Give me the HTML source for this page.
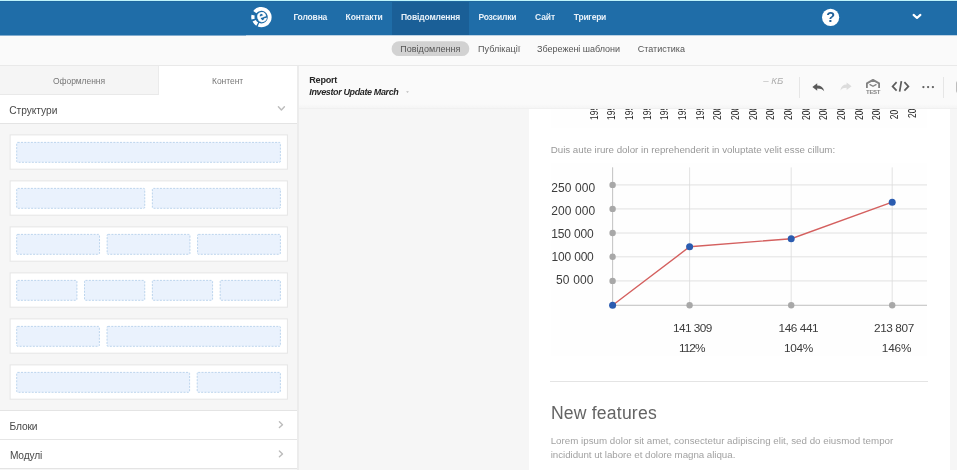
<!DOCTYPE html>
<html lang="uk"><head><meta charset="utf-8"><title>Report — Investor Update March</title>
<style>
html,body{margin:0;padding:0;}
body{width:957px;height:470px;overflow:hidden;position:relative;background:#f6f6f6;font-family:"Liberation Sans", sans-serif;}
.abs{position:absolute;}
.t{position:absolute;white-space:nowrap;line-height:20px;height:20px;}
.layer{position:absolute;left:0;top:0;width:957px;height:470px;will-change:transform;}
.yr{position:absolute;left:0;top:0;width:40px;height:12px;line-height:12px;font-size:10.6px;color:#262626;white-space:nowrap;transform-origin:0 0;text-align:left;}
</style></head><body>
<!-- header -->
<div class="abs" style="left:0;top:0;width:957px;height:35px;background:#1f6da8"></div>
<div class="abs" style="left:0;top:35px;width:957px;height:1px;background:#bcd2e4;z-index:1"></div>
<div class="abs" style="left:0;top:35px;width:246px;height:1px;background:#82acce;z-index:1"></div>
<div class="abs" style="left:0;top:0;width:957px;height:1px;background:#bdf3fb"></div>
<div class="abs" style="left:0;top:1px;width:957px;height:1px;background:#1f679e"></div>
<div class="abs" style="left:392px;top:2px;width:77.3px;height:33px;background:#1a5f97"></div>
<!-- subnav -->
<div class="abs" style="left:0;top:35px;width:957px;height:30.5px;background:#fafafa"></div>
<div class="abs" style="left:0;top:65px;width:957px;height:1px;background:#e9e9e9"></div>
<svg class="abs" style="left:0;top:36px" width="957" height="30"><rect x="391.6" y="5.3" width="77.7" height="14.8" rx="7.4" fill="#d2d2d2"/></svg>
<!-- sidebar -->
<div class="abs" style="left:0;top:66px;width:297px;height:404px;background:#f6f6f6"></div>
<div class="abs" style="left:297px;top:66px;width:2px;height:404px;background:#ececec"></div>
<div class="abs" style="left:0;top:66px;width:158.5px;height:29px;background:#f5f5f5;border-right:1px solid #ebebeb;border-bottom:1px solid #e9e9e9;box-sizing:border-box"></div>
<div class="abs" style="left:158.5px;top:66px;width:138.5px;height:29px;background:#fff"></div>
<div class="abs" style="left:0;top:95px;width:297px;height:28.5px;background:#fff;border-bottom:1px solid #e4e4e4;box-sizing:border-box"></div>
<svg class="abs" style="left:0;top:0" width="300" height="470" viewBox="0 0 300 470"><rect x="10.10" y="134.90" width="277.30" height="34.30" fill="#fff" stroke="#e5e5e5" stroke-width="1"/><rect x="16.70" y="142.40" width="263.70" height="19.90" rx="1" fill="#eaf2fd" stroke="#adcbe8" stroke-width="0.8" stroke-dasharray="2 1.3"/><rect x="10.10" y="180.90" width="277.30" height="34.30" fill="#fff" stroke="#e5e5e5" stroke-width="1"/><rect x="16.70" y="188.40" width="128.05" height="19.90" rx="1" fill="#eaf2fd" stroke="#adcbe8" stroke-width="0.8" stroke-dasharray="2 1.3"/><rect x="152.35" y="188.40" width="128.05" height="19.90" rx="1" fill="#eaf2fd" stroke="#adcbe8" stroke-width="0.8" stroke-dasharray="2 1.3"/><rect x="10.10" y="226.90" width="277.30" height="34.30" fill="#fff" stroke="#e5e5e5" stroke-width="1"/><rect x="16.70" y="234.40" width="82.83" height="19.90" rx="1" fill="#eaf2fd" stroke="#adcbe8" stroke-width="0.8" stroke-dasharray="2 1.3"/><rect x="107.13" y="234.40" width="82.83" height="19.90" rx="1" fill="#eaf2fd" stroke="#adcbe8" stroke-width="0.8" stroke-dasharray="2 1.3"/><rect x="197.57" y="234.40" width="82.83" height="19.90" rx="1" fill="#eaf2fd" stroke="#adcbe8" stroke-width="0.8" stroke-dasharray="2 1.3"/><rect x="10.10" y="272.90" width="277.30" height="34.30" fill="#fff" stroke="#e5e5e5" stroke-width="1"/><rect x="16.70" y="280.40" width="60.23" height="19.90" rx="1" fill="#eaf2fd" stroke="#adcbe8" stroke-width="0.8" stroke-dasharray="2 1.3"/><rect x="84.53" y="280.40" width="60.23" height="19.90" rx="1" fill="#eaf2fd" stroke="#adcbe8" stroke-width="0.8" stroke-dasharray="2 1.3"/><rect x="152.35" y="280.40" width="60.23" height="19.90" rx="1" fill="#eaf2fd" stroke="#adcbe8" stroke-width="0.8" stroke-dasharray="2 1.3"/><rect x="220.17" y="280.40" width="60.23" height="19.90" rx="1" fill="#eaf2fd" stroke="#adcbe8" stroke-width="0.8" stroke-dasharray="2 1.3"/><rect x="10.10" y="318.90" width="277.30" height="34.30" fill="#fff" stroke="#e5e5e5" stroke-width="1"/><rect x="16.70" y="326.40" width="82.70" height="19.90" rx="1" fill="#eaf2fd" stroke="#adcbe8" stroke-width="0.8" stroke-dasharray="2 1.3"/><rect x="107.00" y="326.40" width="173.40" height="19.90" rx="1" fill="#eaf2fd" stroke="#adcbe8" stroke-width="0.8" stroke-dasharray="2 1.3"/><rect x="10.10" y="364.90" width="277.30" height="34.30" fill="#fff" stroke="#e5e5e5" stroke-width="1"/><rect x="16.70" y="372.40" width="172.90" height="19.90" rx="1" fill="#eaf2fd" stroke="#adcbe8" stroke-width="0.8" stroke-dasharray="2 1.3"/><rect x="197.20" y="372.40" width="83.20" height="19.90" rx="1" fill="#eaf2fd" stroke="#adcbe8" stroke-width="0.8" stroke-dasharray="2 1.3"/></svg>
<div class="abs" style="left:0;top:410px;width:297px;height:30px;background:#fff;border-top:1px solid #e4e4e4;border-bottom:1px solid #e6e6e6;box-sizing:border-box"></div>
<div class="abs" style="left:0;top:440px;width:297px;height:29px;background:#fff;border-bottom:1px solid #e4e4e4;box-sizing:border-box"></div>
<!-- email card -->
<div class="abs" style="left:528.5px;top:108px;width:421px;height:362px;background:#fff"></div>
<div class="abs" style="left:551px;top:108px;width:376px;height:20px;background:#fefefe;overflow:hidden"></div>
<div class="abs" style="left:551px;top:163px;width:376px;height:193px;background:#fefefe"></div>
<div class="abs" style="left:0;top:108px;width:957px;height:20px;overflow:hidden;will-change:transform"><div class="yr" style="transform:translate(587.70px,11.9px) rotate(-90deg) scaleX(0.8)">1993</div><div class="yr" style="transform:translate(605.36px,11.9px) rotate(-90deg) scaleX(0.8)">1994</div><div class="yr" style="transform:translate(623.02px,11.9px) rotate(-90deg) scaleX(0.8)">1995</div><div class="yr" style="transform:translate(640.68px,11.9px) rotate(-90deg) scaleX(0.8)">1996</div><div class="yr" style="transform:translate(658.34px,11.9px) rotate(-90deg) scaleX(0.8)">1997</div><div class="yr" style="transform:translate(676.00px,11.9px) rotate(-90deg) scaleX(0.8)">1998</div><div class="yr" style="transform:translate(693.66px,11.9px) rotate(-90deg) scaleX(0.8)">1999</div><div class="yr" style="transform:translate(711.32px,11.9px) rotate(-90deg) scaleX(0.8)">2000</div><div class="yr" style="transform:translate(728.98px,11.9px) rotate(-90deg) scaleX(0.8)">2001</div><div class="yr" style="transform:translate(746.64px,11.9px) rotate(-90deg) scaleX(0.8)">2002</div><div class="yr" style="transform:translate(764.30px,11.9px) rotate(-90deg) scaleX(0.8)">2003</div><div class="yr" style="transform:translate(781.96px,11.9px) rotate(-90deg) scaleX(0.8)">2004</div><div class="yr" style="transform:translate(799.62px,11.9px) rotate(-90deg) scaleX(0.8)">2005</div><div class="yr" style="transform:translate(817.28px,11.9px) rotate(-90deg) scaleX(0.8)">2006</div><div class="yr" style="transform:translate(834.94px,11.9px) rotate(-90deg) scaleX(0.8)">2007</div><div class="yr" style="transform:translate(852.60px,11.9px) rotate(-90deg) scaleX(0.8)">2008</div><div class="yr" style="transform:translate(870.26px,11.9px) rotate(-90deg) scaleX(0.8)">2009</div><div class="yr" style="transform:translate(887.92px,11.3px) rotate(-90deg) scaleX(0.8)">2010</div><div class="yr" style="transform:translate(905.58px,10.0px) rotate(-90deg) scaleX(0.8)">2011</div></div>
<div class="abs" style="left:550px;top:380.5px;width:377.5px;height:1px;background:#e4e4e4"></div>
<svg class="abs" style="left:0;top:0" width="957" height="470" viewBox="0 0 957 470"><line x1="612.6" x2="927" y1="184.9" y2="184.9" stroke="#dadada" stroke-width="0.8"/><line x1="612.6" x2="927" y1="208.9" y2="208.9" stroke="#dadada" stroke-width="0.8"/><line x1="612.6" x2="927" y1="233.0" y2="233.0" stroke="#dadada" stroke-width="0.8"/><line x1="612.6" x2="927" y1="256.8" y2="256.8" stroke="#dadada" stroke-width="0.8"/><line x1="612.6" x2="927" y1="280.9" y2="280.9" stroke="#dadada" stroke-width="0.8"/><line x1="612.6" x2="927" y1="305.3" y2="305.3" stroke="#dadada" stroke-width="0.8"/><line x1="612.6" x2="612.6" y1="167.4" y2="305.3" stroke="#dadada" stroke-width="0.8"/><line x1="689.6" x2="689.6" y1="167.4" y2="305.3" stroke="#dadada" stroke-width="0.8"/><line x1="791.2" x2="791.2" y1="167.4" y2="305.3" stroke="#dadada" stroke-width="0.8"/><line x1="892.2" x2="892.2" y1="167.4" y2="305.3" stroke="#dadada" stroke-width="0.8"/><line x1="612.6" x2="612.6" y1="167.4" y2="305.3" stroke="#c6c6c6" stroke-width="1"/><line x1="612.6" x2="927" y1="305.3" y2="305.3" stroke="#c6c6c6" stroke-width="1"/><polyline fill="none" stroke="#d4605f" stroke-width="1.4" points="612.6,305.3 689.6,246.8 791.2,238.7 892.2,202.2"/><circle cx="612.6" cy="184.9" r="3.2" fill="#a8a8a8"/><circle cx="612.6" cy="208.9" r="3.2" fill="#a8a8a8"/><circle cx="612.6" cy="233.0" r="3.2" fill="#a8a8a8"/><circle cx="612.6" cy="256.8" r="3.2" fill="#a8a8a8"/><circle cx="612.6" cy="280.9" r="3.2" fill="#a8a8a8"/><circle cx="689.6" cy="305.3" r="3.2" fill="#a8a8a8"/><circle cx="791.2" cy="305.3" r="3.2" fill="#a8a8a8"/><circle cx="892.2" cy="305.3" r="3.2" fill="#a8a8a8"/><circle cx="612.6" cy="305.3" r="3.5" fill="#2b5cb0"/><circle cx="689.6" cy="246.8" r="3.5" fill="#2b5cb0"/><circle cx="791.2" cy="238.7" r="3.5" fill="#2b5cb0"/><circle cx="892.2" cy="202.2" r="3.5" fill="#2b5cb0"/></svg>
<!-- toolbar -->
<div class="abs" style="left:299px;top:66px;width:658px;height:43px;background:linear-gradient(to bottom,#fafafa 0,#fafafa 38px,#f5f5f5 42px,#f0f0f0 42px,#f0f0f0 43px)"></div>
<div class="abs" style="left:799px;top:76.5px;width:1px;height:21px;background:#e6e6e6"></div>
<div class="abs" style="left:942.7px;top:76.5px;width:1px;height:21px;background:#e6e6e6"></div>
<div class="abs" style="left:955.5px;top:81px;width:4px;height:12px;background:#bdbdbd;border-radius:2px 0 0 2px"></div>
<div class="layer">
<!-- logo -->
<svg class="abs" style="left:250px;top:6px" width="23" height="23" viewBox="0 0 23 23">
  <g fill="none" stroke="#fff" stroke-linecap="butt">
    <path d="M4.81 6.14 A8.25 8.25 0 1 1 8.44 18.80" stroke-width="3.9"/>
    <path d="M3.10 13.17 A8.55 8.55 0 0 1 3.07 9.18" stroke-width="3.3"/>
    <path d="M7.23 18.04 A8.1 8.1 0 0 1 4.18 14.78" stroke-width="3.7"/>
  </g>
  <text x="11.75" y="15.90" text-anchor="middle" font-family="Liberation Sans, sans-serif" font-weight="bold" font-size="18" fill="#fff" stroke="#fff" stroke-width="0.3" transform="rotate(-20 11.75 11.10)">e</text>
</svg>
<!-- help -->
<svg class="abs" style="left:821px;top:8px" width="19" height="19" viewBox="0 0 19 19">
  <circle cx="9.6" cy="9.3" r="8.6" fill="#fff"/>
  <text x="9.6" y="13.7" text-anchor="middle" font-family="Liberation Sans, sans-serif" font-weight="bold" font-size="14.5" fill="#1f5f97">?</text>
</svg>
<!-- caret -->
<svg class="abs" style="left:910px;top:11px" width="14" height="11" viewBox="0 0 14 11">
  <path d="M3.6 3.9 L7 7 L10.4 3.9" fill="none" stroke="#fff" stroke-width="2.1" stroke-linecap="round" stroke-linejoin="round"/>
</svg>
<!-- sidebar chevrons -->
<svg class="abs" style="left:276px;top:104px" width="11" height="9" viewBox="0 0 11 9">
  <path d="M2.4 2.7 L5.4 6.0 L8.4 2.7" fill="none" stroke="#bdbdbd" stroke-width="1.4" stroke-linecap="round" stroke-linejoin="round"/>
</svg>
<svg class="abs" style="left:276px;top:419px" width="9" height="12" viewBox="0 0 9 12">
  <path d="M3.4 2.8 L6.5 5.7 L3.4 8.6" fill="none" stroke="#bcbcbc" stroke-width="1.4" stroke-linecap="round" stroke-linejoin="round"/>
</svg>
<svg class="abs" style="left:276px;top:448px" width="9" height="12" viewBox="0 0 9 12">
  <path d="M3.4 3.0 L6.5 5.9 L3.4 8.8" fill="none" stroke="#bcbcbc" stroke-width="1.4" stroke-linecap="round" stroke-linejoin="round"/>
</svg>
<!-- small dropdown triangle after title -->
<svg class="abs" style="left:405px;top:90px" width="6" height="5" viewBox="0 0 6 5">
  <path d="M1.1 1.3 L3.9 1.3 L2.5 3.0 Z" fill="#bdbdbd"/>
</svg>
<!-- undo -->
<svg class="abs" style="left:811px;top:81px" width="15" height="12" viewBox="0 0 15 12">
  <path d="M1.4 6.0 L6.2 2.3 L6.2 4.5 C10.0 4.5 12.5 6.4 13.2 10.2 C11.5 8.2 9.5 7.5 6.2 7.5 L6.2 9.7 Z" fill="#5a5a5a"/>
</svg>
<!-- redo -->
<svg class="abs" style="left:839px;top:81px" width="15" height="12" viewBox="0 0 15 12">
  <path d="M12.6 5.2 L7.6 1.4 L7.6 3.6 C4.2 3.6 2 5.6 1.4 9.4 C2.9 7.4 4.7 6.7 7.6 6.7 L7.6 9.0 Z" fill="#dcdcdc"/>
</svg>
<!-- test -->
<svg class="abs" style="left:864px;top:77px" width="18" height="19" viewBox="0 0 18 19">
  <path d="M2.9 10.9 L2.9 6.4 L9 2.9 L15.1 6.4 L15.1 10.9" fill="none" stroke="#828282" stroke-width="1.8" stroke-linejoin="round"/>
  <path d="M6 7.6 L9 9.3 L12 7.6" fill="none" stroke="#828282" stroke-width="1.3" stroke-linejoin="round" stroke-linecap="round"/>
  <text x="9.1" y="16.5" text-anchor="middle" font-family="Liberation Sans, sans-serif" font-weight="bold" font-size="6.1" fill="#848484" letter-spacing="-0.4">TEST</text>
</svg>
<!-- code -->
<svg class="abs" style="left:890px;top:79px" width="21" height="15" viewBox="0 0 21 15">
  <g fill="none" stroke="#5c5c5c" stroke-width="1.7" stroke-linejoin="miter" stroke-linecap="butt">
    <path d="M6.6 3.2 L2.6 7.4 L6.6 11.6"/>
    <path d="M14.4 3.2 L18.4 7.4 L14.4 11.6"/>
    <path d="M11.4 2.2 L9.6 12.6"/>
  </g>
</svg>
<!-- more -->
<svg class="abs" style="left:920px;top:84px" width="16" height="6" viewBox="0 0 16 6">
  <circle cx="3.4" cy="3.1" r="1.15" fill="#5e5e5e"/><circle cx="8.1" cy="3.1" r="1.15" fill="#5e5e5e"/><circle cx="12.9" cy="3.1" r="1.15" fill="#5e5e5e"/>
</svg>

<div class="t" style="left:293.4px;top:7px;font-size:8.5px;letter-spacing:-0.165px;font-weight:bold;color:#e8f1f9">Головна</div><div class="t" style="left:345.6px;top:7px;font-size:8.5px;letter-spacing:-0.131px;font-weight:bold;color:#e8f1f9">Контакти</div><div class="t" style="left:400.9px;top:7px;font-size:8.5px;letter-spacing:-0.134px;font-weight:bold;color:#e8f1f9">Повідомлення</div><div class="t" style="left:478.4px;top:7px;font-size:8.5px;letter-spacing:-0.174px;font-weight:bold;color:#e8f1f9">Розсилки</div><div class="t" style="left:535.0px;top:7px;font-size:8.5px;letter-spacing:-0.090px;font-weight:bold;color:#e8f1f9">Сайт</div><div class="t" style="left:573.8px;top:7px;font-size:8.5px;letter-spacing:-0.241px;font-weight:bold;color:#e8f1f9">Тригери</div><div class="t" style="left:400.2px;top:39px;font-size:9px;letter-spacing:0.043px;color:#555">Повідомлення</div><div class="t" style="left:478.0px;top:39px;font-size:9px;letter-spacing:0.033px;color:#555">Публікації</div><div class="t" style="left:537.1px;top:39px;font-size:9px;letter-spacing:-0.020px;color:#555">Збережені шаблони</div><div class="t" style="left:637.7px;top:39px;font-size:9px;letter-spacing:0.002px;color:#555">Статистика</div><div class="t" style="left:53.0px;top:71px;font-size:8.5px;letter-spacing:-0.059px;color:#777">Оформлення</div><div class="t" style="left:212.0px;top:71px;font-size:8.5px;letter-spacing:-0.043px;color:#777">Контент</div><div class="t" style="left:9.3px;top:101px;font-size:10.2px;letter-spacing:-0.040px;color:#484848">Структури</div><div class="t" style="left:9.6px;top:417px;font-size:10.2px;letter-spacing:-0.131px;color:#484848">Блоки</div><div class="t" style="left:9.9px;top:446px;font-size:10.2px;letter-spacing:-0.146px;color:#484848">Модулі</div><div class="t" style="left:309.3px;top:70px;font-size:9.1px;letter-spacing:-0.269px;font-weight:bold;color:#262626">Report</div><div class="t" style="left:309.3px;top:82px;font-size:9.0px;letter-spacing:-0.373px;font-weight:bold;font-style:italic;color:#262626">Investor Update March</div><div class="t" style="left:763.2px;top:71px;font-size:9.7px;letter-spacing:0.023px;font-style:italic;color:#adadad">– КБ</div><div class="t" style="left:550.7px;top:140px;font-size:9.75px;letter-spacing:-0.008px;color:#999">Duis aute irure dolor in reprehenderit in voluptate velit esse cillum:</div><div class="t" style="left:550.9px;top:403px;font-size:17.6px;letter-spacing:0.195px;color:#646464">New features</div><div class="t" style="left:550.7px;top:431px;font-size:9.75px;letter-spacing:0.008px;color:#a2a2a2">Lorem ipsum dolor sit amet, consectetur adipiscing elit, sed do eiusmod tempor</div><div class="t" style="left:550.7px;top:445px;font-size:9.75px;letter-spacing:-0.042px;color:#a2a2a2">incididunt ut labore et dolore magna aliqua.</div><div class="t" style="left:551.3px;top:178px;font-size:12px;letter-spacing:0.073px;color:#3c3c3c">250 000</div><div class="t" style="left:551.3px;top:201px;font-size:12px;letter-spacing:0.073px;color:#3c3c3c">200 000</div><div class="t" style="left:551.3px;top:224px;font-size:12px;letter-spacing:-0.184px;color:#3c3c3c">150 000</div><div class="t" style="left:551.6px;top:247px;font-size:12px;letter-spacing:-0.199px;color:#3c3c3c">100 000</div><div class="t" style="left:556.0px;top:270px;font-size:12px;letter-spacing:0.149px;color:#3c3c3c">50 000</div><div class="t" style="left:673.0px;top:318px;font-size:11.8px;letter-spacing:-0.537px;color:#3c3c3c">141 309</div><div class="t" style="left:778.6px;top:318px;font-size:11.8px;letter-spacing:-0.437px;color:#3c3c3c">146 441</div><div class="t" style="left:874.0px;top:318px;font-size:11.8px;letter-spacing:-0.408px;color:#3c3c3c">213 807</div><div class="t" style="left:678.9px;top:338px;font-size:11.8px;letter-spacing:-0.924px;color:#3c3c3c">112%</div><div class="t" style="left:784.1px;top:338px;font-size:11.8px;letter-spacing:-0.322px;color:#3c3c3c">104%</div><div class="t" style="left:881.8px;top:338px;font-size:11.8px;letter-spacing:-0.147px;color:#3c3c3c">146%</div>
</div>
</body></html>
